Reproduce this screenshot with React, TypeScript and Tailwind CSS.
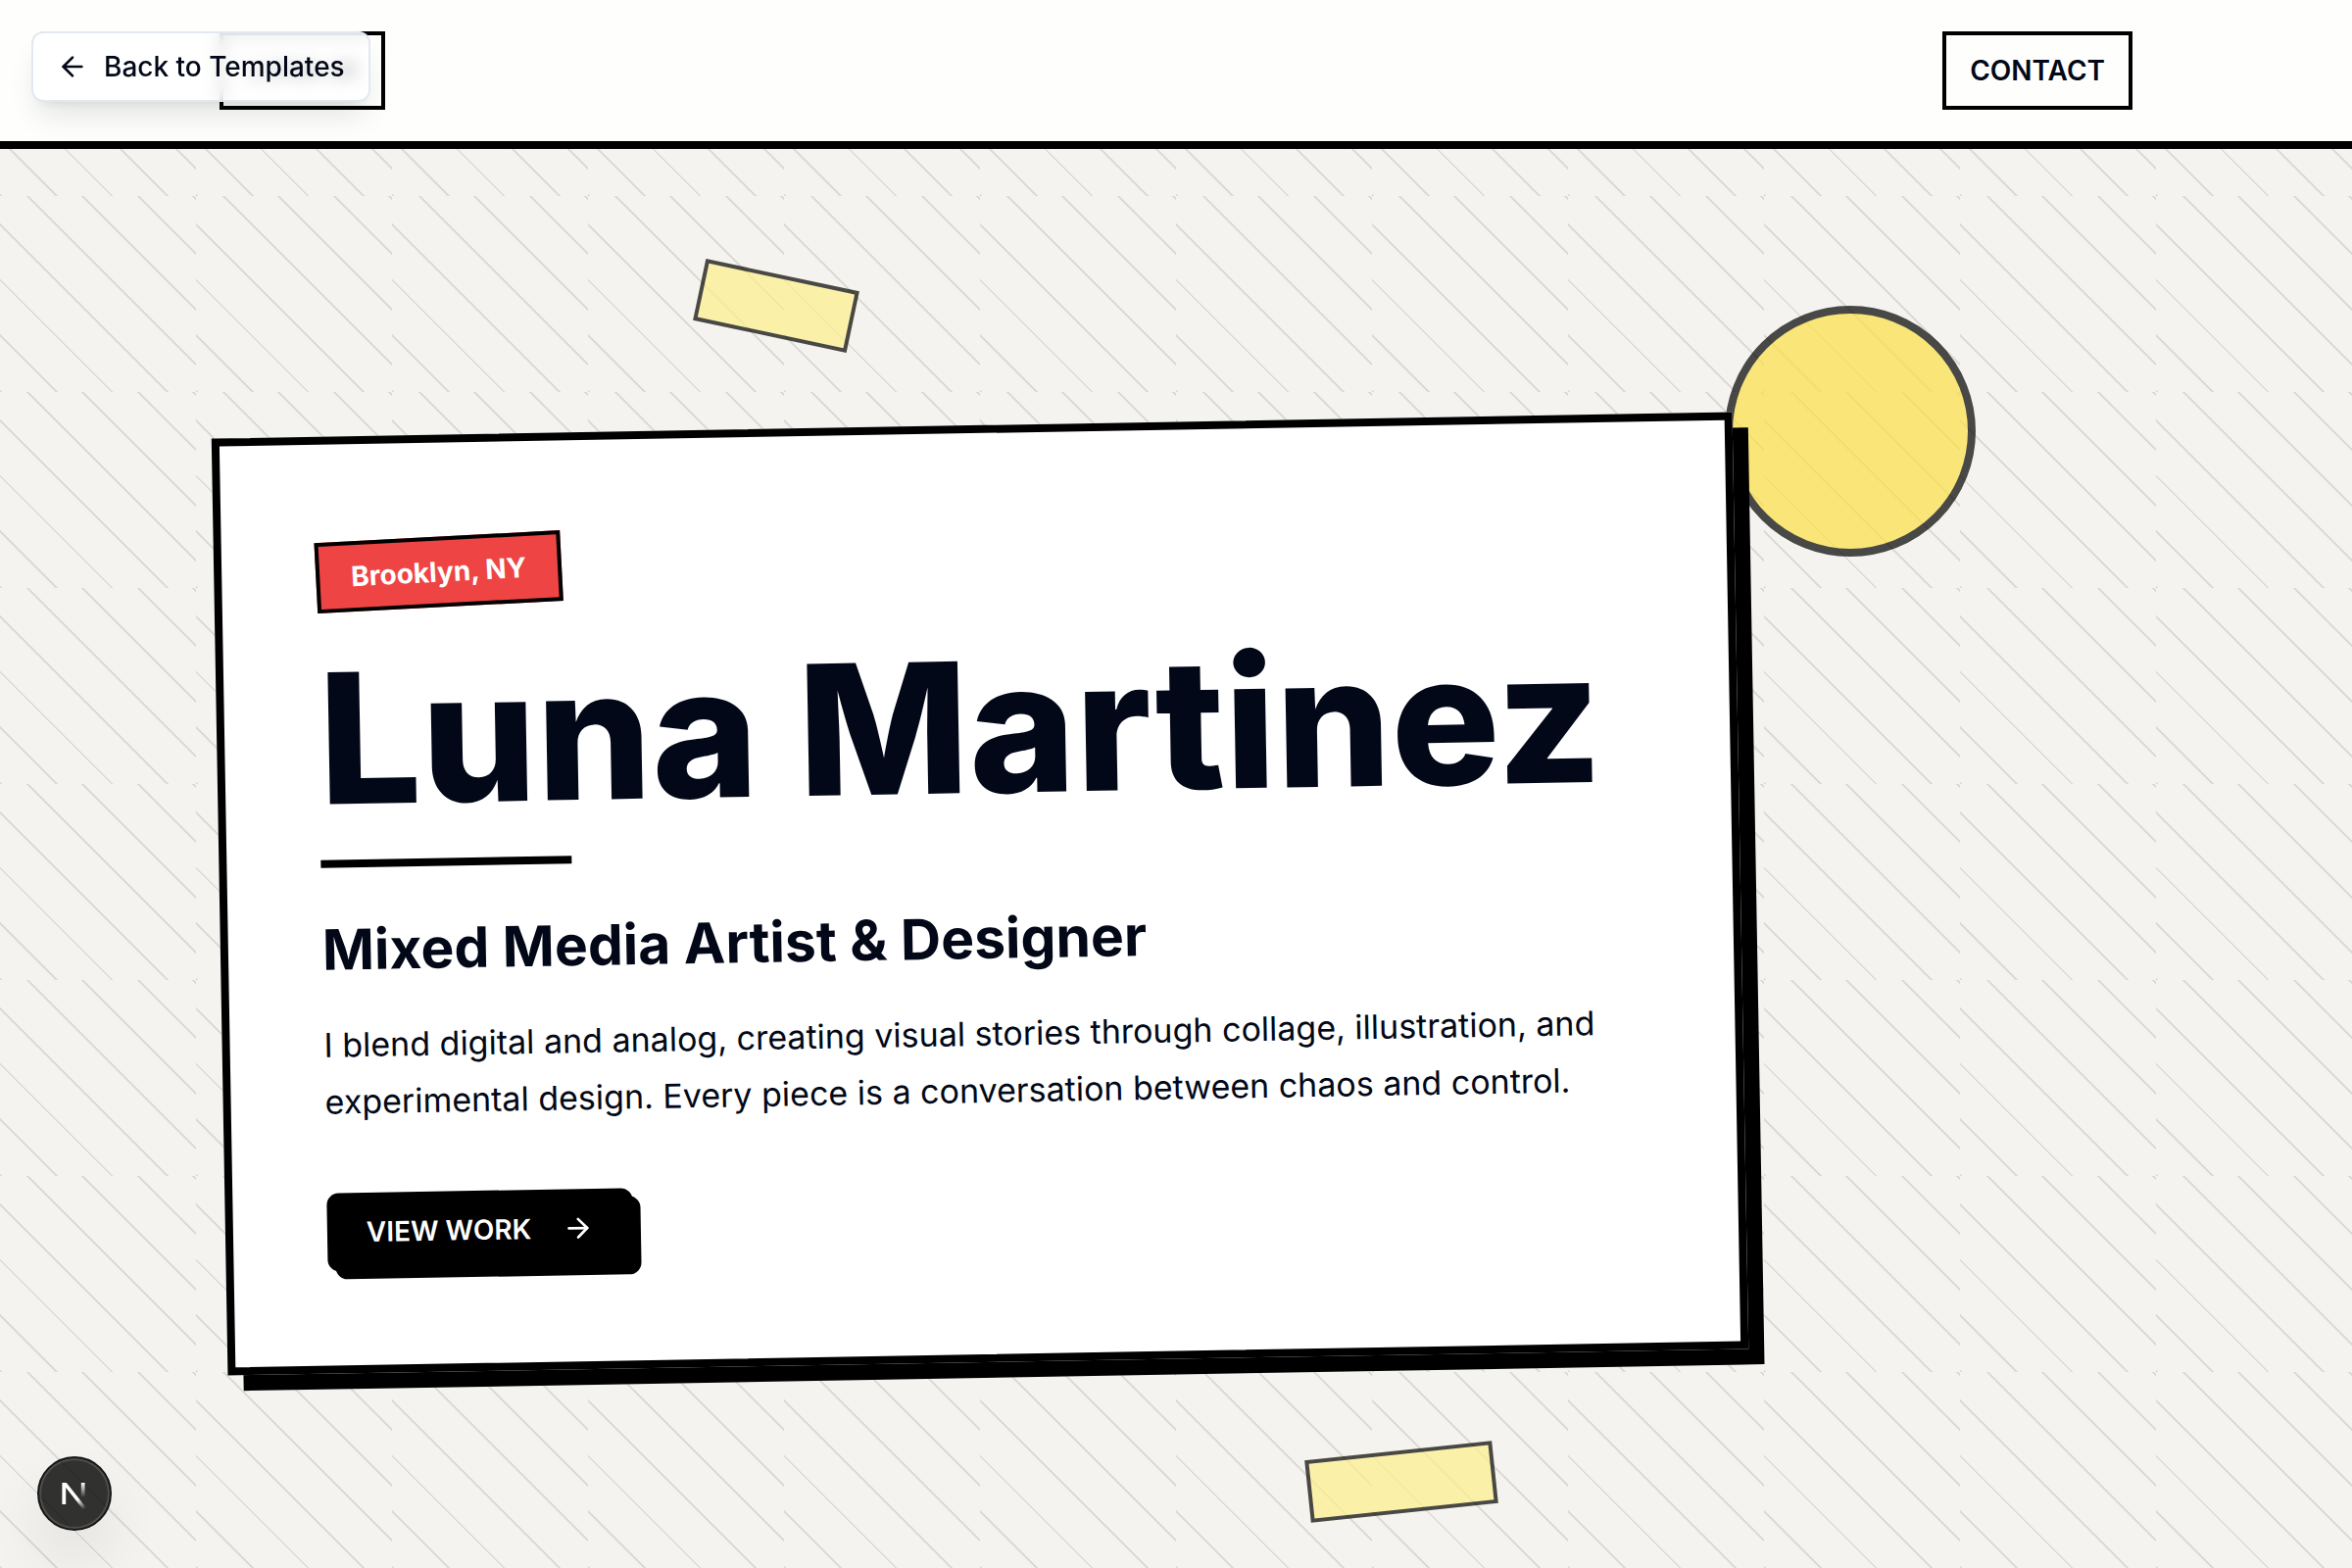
import { ArrowLeft, ArrowRight } from "lucide-react";

function NextBadge() {
  return (
    <button
      type="button"
      aria-label="Open developer tools"
      className="fixed bottom-[38px] left-[38px] z-20 flex size-[76px] items-center justify-center rounded-full border-2 border-[#171717] bg-black/80 shadow-[inset_0_0_0_2px_rgba(255,255,255,0.14),0_32px_64px_-8px_rgba(0,0,0,0.12)]"
    >
      <svg width="40" height="40" viewBox="0 0 40 40" fill="none" aria-hidden="true" className="shrink-0">
        <defs>
          <linearGradient id="stem" x1="28" y1="9" x2="28" y2="24" gradientUnits="userSpaceOnUse">
            <stop stopColor="white" />
            <stop offset="1" stopColor="white" stopOpacity="0" />
          </linearGradient>
          <linearGradient id="diagonal" x1="23" y1="26" x2="30" y2="36" gradientUnits="userSpaceOnUse">
            <stop stopColor="white" />
            <stop offset="1" stopColor="white" stopOpacity="0" />
          </linearGradient>
        </defs>
        <path d="M7.4 31V9h4.4L32 34.5l-2.8 2.2L11.2 14v17z" fill="url(#diagonal)" />
        <path d="M26.8 9h3.8v16h-3.8z" fill="url(#stem)" />
      </svg>
    </button>
  );
}

export default function App() {
  return (
    <div className="relative min-h-screen overflow-hidden bg-[#f4f3ef] font-['Inter',sans-serif] text-[#020817]">
      <div className="absolute inset-0 bg-[repeating-linear-gradient(45deg,#000_0,#000_2px,transparent_0,transparent_40px)] bg-[length:200px_200px] opacity-10" />

      <div className="absolute top-[280px] left-[712px] h-16 w-40 rotate-12 border-4 border-black bg-[#fef08a] opacity-70" />
      <div className="absolute top-[312px] right-96 size-64 rounded-full border-8 border-black bg-[#fde047] opacity-70" />
      <div className="absolute right-[874px] bottom-14 h-16 w-48 -rotate-6 border-4 border-black bg-[#fef08a] opacity-70" />

      <header className="relative z-10 border-b-8 border-black bg-[#fefefd]">
        <div className="mx-auto flex max-w-[2048px] items-center justify-between px-12 py-8">
          <a href="#top" className="border-4 border-black px-6 py-4 text-[28px] leading-10 font-semibold">
            LUNA.M
          </a>
          <a href="#contact" className="border-4 border-black px-6 py-4 text-[28px] leading-10 font-semibold">
            CONTACT
          </a>
        </div>
      </header>

      <main id="top" className="relative mx-auto max-w-[2048px] px-12 pt-[282px] pb-48">
        <section className="relative max-w-[1552px] -rotate-1 border-8 border-black bg-white p-24 shadow-[16px_16px_0_0_#000]">
          <span className="inline-block -rotate-2 border-4 border-black bg-[#ef4444] px-8 py-3 text-[28px] leading-10 font-bold text-white">
            Brooklyn, NY
          </span>
          <h1 className="mt-9 text-[185px] leading-[192px] font-extrabold">Luna Martinez</h1>
          <div className="mt-7 h-2 w-64 bg-black" />
          <h2 className="mt-12 text-[57px] leading-[72px] font-bold">Mixed Media Artist &amp; Designer</h2>
          <p className="mt-8 max-w-[1344px] text-[34px] leading-[58px]">
            I blend digital and analog, creating visual stories through collage, illustration, and experimental design.
            Every piece is a conversation between chaos and control.
          </p>
          <button
            type="button"
            className="mt-16 flex h-20 items-center rounded-xl bg-black px-10 text-[28px] leading-10 font-semibold text-white shadow-[8px_8px_0_0_#000]"
          >
            VIEW WORK
            <ArrowRight size={32} className="ml-8" />
          </button>
        </section>
      </main>

      <a
        href="#templates"
        className="fixed top-8 left-8 z-20 flex items-center gap-4 rounded-xl border-2 border-slate-200 bg-white/80 px-6 py-[14px] text-[28px] leading-10 font-medium shadow-[0_20px_30px_-6px_rgba(0,0,0,0.1),0_8px_12px_-8px_rgba(0,0,0,0.1)] backdrop-blur-[8px]"
      >
        <ArrowLeft size={32} />
        Back to Templates
      </a>

      <NextBadge />
    </div>
  );
}
